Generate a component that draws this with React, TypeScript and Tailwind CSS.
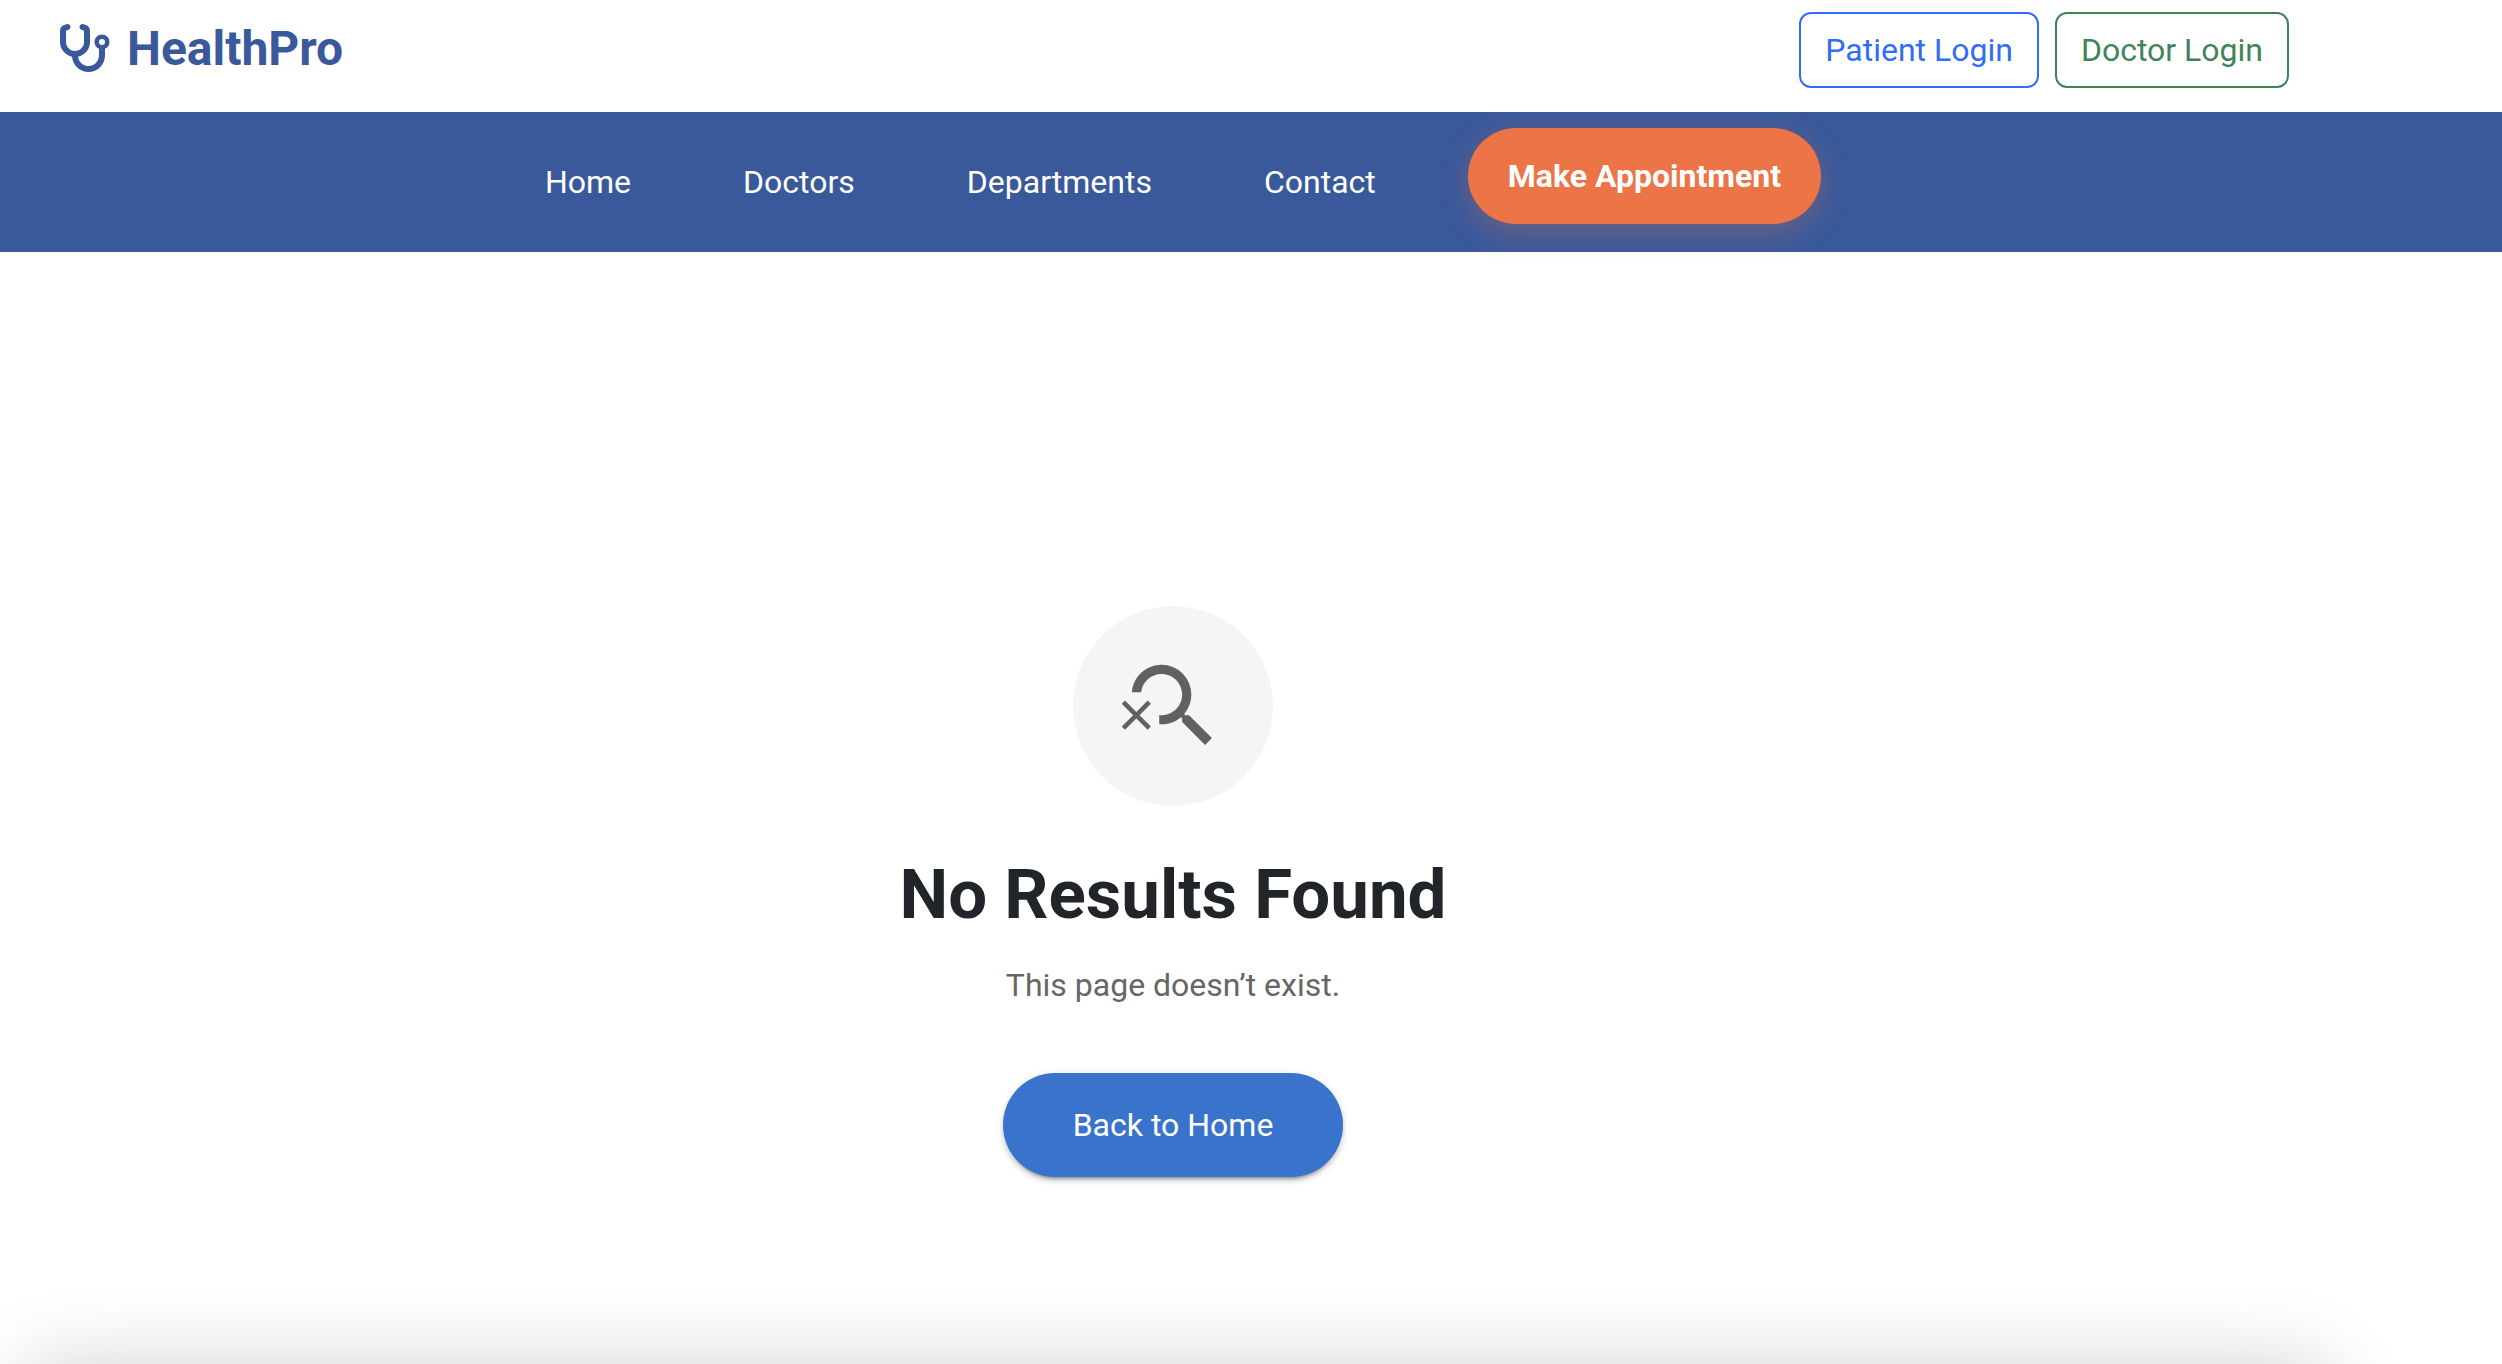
import { FaStethoscope } from "react-icons/fa6";
import { MdSearchOff } from "react-icons/md";

const links = ["Home", "Doctors", "Departments", "Contact"];

function TopBar() {
  return (
    <header className="flex h-28 items-start justify-between pl-[57px] pr-[213px]">
      <a href="#" className="flex items-start gap-4 pt-[13px] text-[48px] leading-[72px] font-bold text-[#39599b]">
        <FaStethoscope className="mt-2 size-[54px]" aria-hidden="true" />
        HealthPro
      </a>
      <div className="flex gap-4 pt-3">
        <button type="button" className="rounded-xl border-2 border-[#2f6df6] px-6 py-3 leading-12 text-[#2f6df6]">
          Patient Login
        </button>
        <button type="button" className="rounded-xl border-2 border-[#3f8458] px-6 py-3 leading-12 text-[#3f8458]">
          Doctor Login
        </button>
      </div>
    </header>
  );
}

function NavBar() {
  return (
    <nav className="flex h-[140px] items-center justify-center bg-[#39599b] pr-[136px] text-white">
      <ul className="flex items-center gap-28">
        {links.map((label) => (
          <li key={label}>
            <a href="#" className="leading-12">
              {label}
            </a>
          </li>
        ))}
      </ul>
      <button
        type="button"
        className="mb-3 ml-[92px] rounded-full bg-[#ec7446] px-10 py-6 leading-12 font-bold shadow-[0_8px_30px_rgba(236,116,70,0.3)]"
      >
        Make Appointment
      </button>
    </nav>
  );
}

export default function App() {
  return (
    <div className="flex h-screen flex-col overflow-hidden bg-white font-[Roboto,sans-serif] text-[32px]">
      <TopBar />
      <NavBar />
      <main className="flex grow flex-col items-center pt-[354px] pr-[156px]">
        <div className="flex size-[200px] items-center justify-center rounded-full bg-[#f5f5f5] text-[#616161]">
          <MdSearchOff className="size-[110px]" aria-hidden="true" />
        </div>
        <h1 className="mt-[47px] text-[69px] leading-[84px] font-bold text-[#212529]">No Results Found</h1>
        <p className="mt-6 leading-12 text-[#666666]">This page doesn’t exist.</p>
        <button
          type="button"
          className="mt-16 rounded-full bg-[#3a73cc] px-[70px] py-7 leading-12 text-white shadow-[0_6px_2px_-4px_rgba(0,0,0,0.2),0_4px_4px_rgba(0,0,0,0.14),0_2px_10px_rgba(0,0,0,0.12)]"
        >
          Back to Home
        </button>
      </main>
      <div className="mr-[168px] -mb-40 ml-5 h-40 shrink-0 rounded-t-[40px] bg-white shadow-[0_0_80px_rgba(0,0,0,0.18)]" />
    </div>
  );
}
